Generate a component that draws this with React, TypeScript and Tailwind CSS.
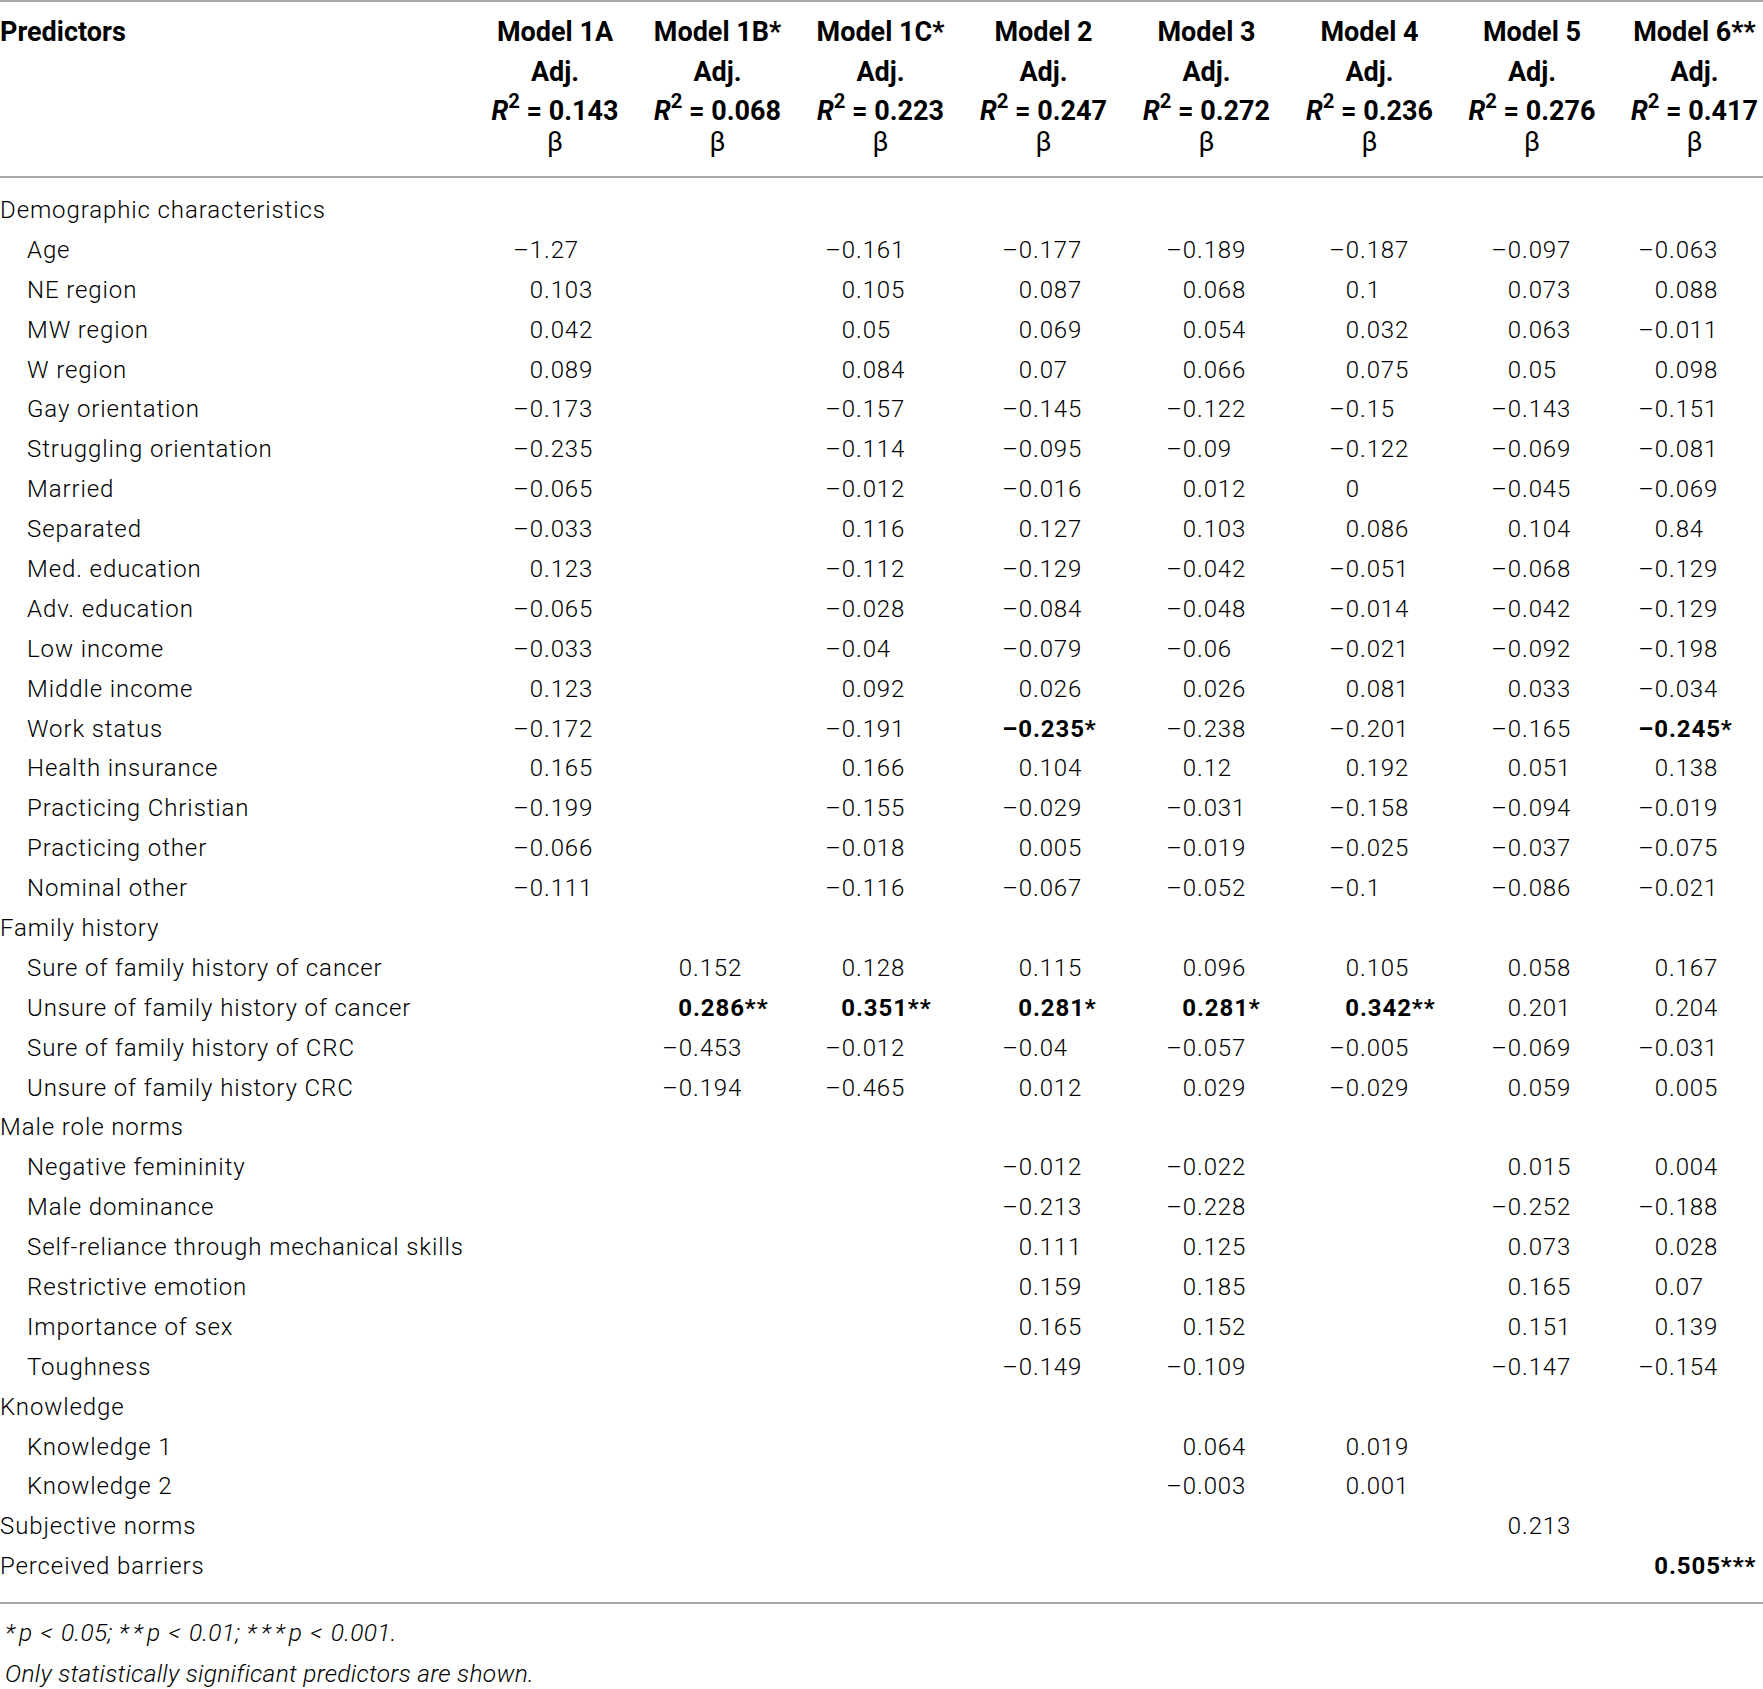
import React from 'react'

const models = ['Model 1A', 'Model 1B*', 'Model 1C*', 'Model 2', 'Model 3', 'Model 4', 'Model 5', 'Model 6**']
const r2 = ['0.143', '0.068', '0.223', '0.247', '0.272', '0.236', '0.276', '0.417']

// width of the sign + integer part, so the decimal points line up in each column
const intWidth = ['w-[70px]', 'w-[57px]', 'w-[57px]', 'w-[71px]', 'w-[72px]', 'w-[72px]', 'w-[71px]', 'w-[56px]']

const gridCols = 'grid grid-cols-[474px_162px_163px_163px_163px_163px_163px_162px_163px] w-[1776px]'

type Row = { label: string; indent?: boolean; values?: string[] }

const _ = ''

const rows: Row[] = [
  { label: 'Demographic characteristics' },
  { label: 'Age', indent: true, values: ['–1.27', _, '–0.161', '–0.177', '–0.189', '–0.187', '–0.097', '–0.063'] },
  { label: 'NE region', indent: true, values: ['0.103', _, '0.105', '0.087', '0.068', '0.1', '0.073', '0.088'] },
  { label: 'MW region', indent: true, values: ['0.042', _, '0.05', '0.069', '0.054', '0.032', '0.063', '–0.011'] },
  { label: 'W region', indent: true, values: ['0.089', _, '0.084', '0.07', '0.066', '0.075', '0.05', '0.098'] },
  { label: 'Gay orientation', indent: true, values: ['–0.173', _, '–0.157', '–0.145', '–0.122', '–0.15', '–0.143', '–0.151'] },
  { label: 'Struggling orientation', indent: true, values: ['–0.235', _, '–0.114', '–0.095', '–0.09', '–0.122', '–0.069', '–0.081'] },
  { label: 'Married', indent: true, values: ['–0.065', _, '–0.012', '–0.016', '0.012', '0', '–0.045', '–0.069'] },
  { label: 'Separated', indent: true, values: ['–0.033', _, '0.116', '0.127', '0.103', '0.086', '0.104', '0.84'] },
  { label: 'Med. education', indent: true, values: ['0.123', _, '–0.112', '–0.129', '–0.042', '–0.051', '–0.068', '–0.129'] },
  { label: 'Adv. education', indent: true, values: ['–0.065', _, '–0.028', '–0.084', '–0.048', '–0.014', '–0.042', '–0.129'] },
  { label: 'Low income', indent: true, values: ['–0.033', _, '–0.04', '–0.079', '–0.06', '–0.021', '–0.092', '–0.198'] },
  { label: 'Middle income', indent: true, values: ['0.123', _, '0.092', '0.026', '0.026', '0.081', '0.033', '–0.034'] },
  { label: 'Work status', indent: true, values: ['–0.172', _, '–0.191', 'b:–0.235*', '–0.238', '–0.201', '–0.165', 'b:–0.245*'] },
  { label: 'Health insurance', indent: true, values: ['0.165', _, '0.166', '0.104', '0.12', '0.192', '0.051', '0.138'] },
  { label: 'Practicing Christian', indent: true, values: ['–0.199', _, '–0.155', '–0.029', '–0.031', '–0.158', '–0.094', '–0.019'] },
  { label: 'Practicing other', indent: true, values: ['–0.066', _, '–0.018', '0.005', '–0.019', '–0.025', '–0.037', '–0.075'] },
  { label: 'Nominal other', indent: true, values: ['–0.111', _, '–0.116', '–0.067', '–0.052', '–0.1', '–0.086', '–0.021'] },
  { label: 'Family history' },
  { label: 'Sure of family history of cancer', indent: true, values: [_, '0.152', '0.128', '0.115', '0.096', '0.105', '0.058', '0.167'] },
  { label: 'Unsure of family history of cancer', indent: true, values: [_, 'b:0.286**', 'b:0.351**', 'b:0.281*', 'b:0.281*', 'b:0.342**', '0.201', '0.204'] },
  { label: 'Sure of family history of CRC', indent: true, values: [_, '–0.453', '–0.012', '–0.04', '–0.057', '–0.005', '–0.069', '–0.031'] },
  { label: 'Unsure of family history CRC', indent: true, values: [_, '–0.194', '–0.465', '0.012', '0.029', '–0.029', '0.059', '0.005'] },
  { label: 'Male role norms' },
  { label: 'Negative femininity', indent: true, values: [_, _, _, '–0.012', '–0.022', _, '0.015', '0.004'] },
  { label: 'Male dominance', indent: true, values: [_, _, _, '–0.213', '–0.228', _, '–0.252', '–0.188'] },
  { label: 'Self-reliance through mechanical skills', indent: true, values: [_, _, _, '0.111', '0.125', _, '0.073', '0.028'] },
  { label: 'Restrictive emotion', indent: true, values: [_, _, _, '0.159', '0.185', _, '0.165', '0.07'] },
  { label: 'Importance of sex', indent: true, values: [_, _, _, '0.165', '0.152', _, '0.151', '0.139'] },
  { label: 'Toughness', indent: true, values: [_, _, _, '–0.149', '–0.109', _, '–0.147', '–0.154'] },
  { label: 'Knowledge' },
  { label: 'Knowledge 1', indent: true, values: [_, _, _, _, '0.064', '0.019', _, _] },
  { label: 'Knowledge 2', indent: true, values: [_, _, _, _, '–0.003', '0.001', _, _] },
  { label: 'Subjective norms', values: [_, _, _, _, _, _, '0.213', _] },
  { label: 'Perceived barriers', values: [_, _, _, _, _, _, _, 'b:0.505***'] },
]

function Value({ raw, col }: { raw: string; col: number }) {
  if (!raw) return <div />
  const bold = raw.startsWith('b:')
  const text = bold ? raw.slice(2) : raw
  const dot = text.indexOf('.')
  const whole = dot === -1 ? text : text.slice(0, dot)
  const frac = dot === -1 ? '' : text.slice(dot)
  return (
    <div className={`flex whitespace-nowrap ${bold ? 'font-bold' : ''}`}>
      <span className={`shrink-0 text-right ${intWidth[col]}`}>{whole}</span>
      <span>{frac}</span>
    </div>
  )
}

function Rule() {
  return <div className="h-[2px] w-full bg-[#a9a9a9]" />
}

function Stars({ n }: { n: number }) {
  return <span className="tracking-[4px]">{'*'.repeat(n)}</span>
}

function Lt() {
  return <span className="mx-[8px]">&lt;</span>
}

export default function App() {
  return (
    <div className="h-[1689px] w-[1763px] overflow-hidden bg-white font-[Roboto,sans-serif] text-black">
      <Rule />

      {/* header */}
      <div className={`${gridCols} pt-[10px] pb-[23px] text-[27px] font-bold`}>
        <div className="flex h-[40px] items-center">Predictors</div>
        {models.map((m, i) => (
          <div key={m} className="flex flex-col items-center whitespace-nowrap">
            <div className="flex h-[40px] items-center">{m}</div>
            <div className="flex h-[40px] items-center">Adj.</div>
            <div className="flex h-[39px] items-center">
              <i>R</i>
              <sup>2</sup>
              <span>&nbsp;=&nbsp;{r2[i]}</span>
            </div>
            <div className="flex h-[22px] items-center font-normal">β</div>
          </div>
        ))}
      </div>

      <Rule />

      {/* body */}
      <div className="pt-[12px] pb-[16px] text-[24px] font-light tracking-[0.9px]">
        {rows.map((row) => (
          <div key={row.label} className={`${gridCols} h-[39.9px] items-center`}>
            <div className={`whitespace-nowrap ${row.indent ? 'pl-[27px]' : ''}`}>{row.label}</div>
            {(row.values ?? []).map((v, i) => (
              <Value key={i} raw={v} col={i} />
            ))}
          </div>
        ))}
      </div>

      <Rule />

      <div className="pt-[8px] pl-[5px] text-[24.5px] font-light italic leading-[41px] tracking-[0.3px]">
        <p>
          <Stars n={1} />p<Lt />0.05; <Stars n={2} />p<Lt />0.01; <Stars n={3} />p<Lt />0.001.
        </p>
        <p>Only statistically significant predictors are shown.</p>
      </div>
    </div>
  )
}
